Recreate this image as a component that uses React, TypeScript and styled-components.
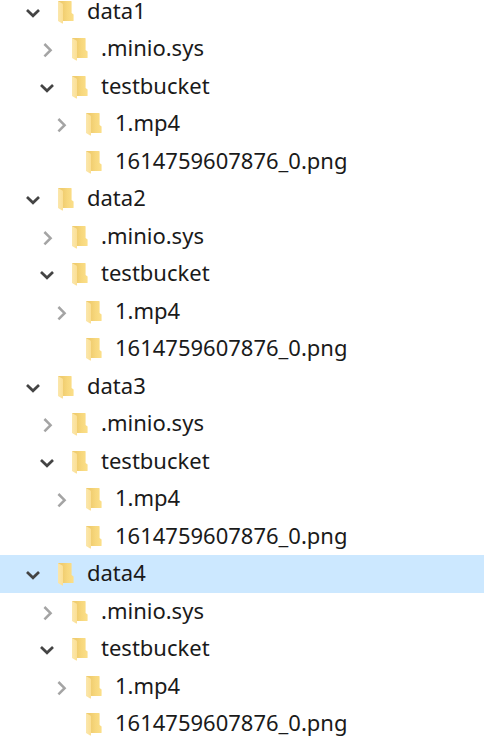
import React, { useState } from "react";
import styled, { createGlobalStyle } from "styled-components";

const GlobalStyle = createGlobalStyle`
  body {
    margin: 0;
    background: #ffffff;
    color: #1a1a1a;
    font-family: "Noto Sans", "Open Sans", sans-serif;
  }
`;

const Tree = styled.ul`
  list-style: none;
  margin: -7px 0 0;
  padding: 0;
`;

const Row = styled.li<{ $depth: number; $selected: boolean }>`
  display: flex;
  align-items: center;
  height: 37px;
  padding-left: ${(p) => 25 + p.$depth * 14}px;
  background: ${(p) => (p.$selected ? "#cce8ff" : "transparent")};

  &:nth-child(even) {
    height: 38px;
  }
`;

const Toggle = styled.button`
  display: flex;
  flex: none;
  width: 16px;
  height: 24px;
  margin-right: 16px;
  padding: 0;
  border: 0;
  background: none;
`;

const ToggleSpace = styled.span`
  flex: none;
  width: 16px;
  margin-right: 16px;
`;

const Label = styled.button`
  display: flex;
  align-items: center;
  gap: 12px;
  padding: 0;
  border: 0;
  background: none;
  color: inherit;
  font: inherit;
  font-size: 22px;
  line-height: 30px;
  white-space: nowrap;
`;

const Name = styled.span`
  padding-bottom: 4px;
`;

const Chevron = ({ open }: { open: boolean }) => (
  <svg width="16" height="24" viewBox="0 0 16 24" fill="none" aria-hidden="true">
    {open ? (
      <path d="M2 10 L8 15.8 L14 10" stroke="#444444" strokeWidth="2.7" />
    ) : (
      <path d="M5.4 7 L11.6 13.2 L5.4 19.4" stroke="#a4a4a4" strokeWidth="2.5" />
    )}
  </svg>
);

const FolderIcon = () => (
  <svg width="18" height="24" viewBox="0 0 18 24" aria-hidden="true">
    <defs>
      <linearGradient id="folderBack" x1="0" y1="0" x2="1" y2="0">
        <stop offset="0.3" stopColor="#f0cd70" />
        <stop offset="0.6" stopColor="#f7d77c" />
        <stop offset="1" stopColor="#fbdf8a" />
      </linearGradient>
      <linearGradient id="folderFlap" x1="0" y1="0" x2="1" y2="0">
        <stop offset="0" stopColor="#fbe7ad" />
        <stop offset="1" stopColor="#fbdf94" />
      </linearGradient>
    </defs>
    <path d="M1.6 1 H14 Q14.6 1 14.6 1.6 V13 L16.6 14.6 V20.4 Q16.6 21 16 21 H1 V1.6 Z" fill="url(#folderBack)" />
    <path d="M1 1.2 L5.4 3.6 Q6 4 6 4.8 V23 Q6 23.8 5.2 23.4 L1.4 21.2 Q1 21 1 20.4 Z" fill="url(#folderFlap)" />
  </svg>
);

type Node = { id: string; name: string; depth: number; open?: boolean };

const nodes: Node[] = ["data1", "data2", "data3", "data4"].flatMap((disk) => [
  { id: disk, name: disk, depth: 0, open: true },
  { id: `${disk}/sys`, name: ".minio.sys", depth: 1, open: false },
  { id: `${disk}/bucket`, name: "testbucket", depth: 1, open: true },
  { id: `${disk}/mp4`, name: "1.mp4", depth: 2, open: false },
  { id: `${disk}/png`, name: "1614759607876_0.png", depth: 2 },
]);

export default function App() {
  const [selected, setSelected] = useState("data4");
  const [closed, setClosed] = useState<string[]>([]);

  const toggle = (id: string) =>
    setClosed((ids) => (ids.includes(id) ? ids.filter((i) => i !== id) : [...ids, id]));

  const visible = nodes.filter((n) => {
    const disk = n.id.split("/")[0];
    if (n.depth > 0 && closed.includes(disk)) return false;
    return !(n.depth > 1 && closed.includes(`${disk}/bucket`));
  });

  return (
    <>
      <GlobalStyle />
      <nav aria-label="Folders">
        <Tree>
          {visible.map((n) => (
            <Row key={n.id} $depth={n.depth} $selected={n.id === selected}>
              {n.open === undefined ? (
                <ToggleSpace />
              ) : (
                <Toggle
                  type="button"
                  aria-label={`Toggle ${n.name}`}
                  aria-expanded={n.open && !closed.includes(n.id)}
                  onClick={() => n.open && toggle(n.id)}
                >
                  <Chevron open={n.open && !closed.includes(n.id)} />
                </Toggle>
              )}
              <Label type="button" onClick={() => setSelected(n.id)}>
                <FolderIcon />
                <Name>{n.name}</Name>
              </Label>
            </Row>
          ))}
        </Tree>
      </nav>
    </>
  );
}
